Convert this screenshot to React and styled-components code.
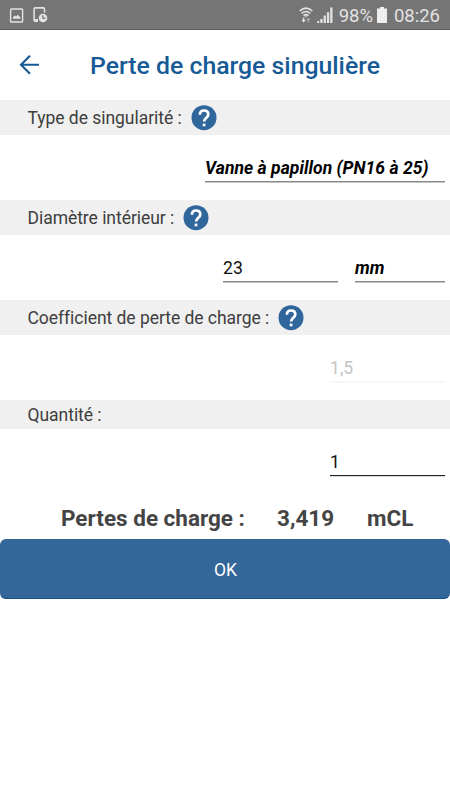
import React from "react";
import styled, {createGlobalStyle, css} from "styled-components";

const GlobalStyle = createGlobalStyle`
  * {
    box-sizing: border-box;
  }

  body {
    margin: 0;
    background: #fff;
    font-family: Roboto, "Liberation Sans", sans-serif;
  }
`;

const Screen = styled.div`
  display: flex;
  flex-direction: column;
  width: 450px;
  height: 800px;
  background: #fff;
`;

const StatusBar = styled.div`
  display: flex;
  justify-content: space-between;
  height: 30px;
  padding: 0 10px 0 9px;
  background: #757575;
  border-bottom: 1px solid #5c595c;
  color: #e2e2e2;
`;

const StatusGroup = styled.div`
  display: flex;
  align-items: center;
  gap: ${props => props.gap}px;
  padding-top: 1px;
`;

const StatusText = styled.span`
  width: ${props => props.width}px;
  padding-top: 2px;
  font-size: 18.5px;
  line-height: 26px;
  text-align: right;
  white-space: nowrap;
`;

const Header = styled.header`
  display: flex;
  align-items: center;
  height: 70px;
  padding-left: 19px;
  color: #165a96;
`;

const BackButton = styled.button`
  display: flex;
  width: 21px;
  padding: 0;
  margin-right: 50px;
  border: 0;
  background: none;
  color: inherit;
`;

const Title = styled.h1`
  margin: 2px 0 0;
  font-size: 24.8px;
  font-weight: 500;
  line-height: 32px;
  white-space: nowrap;
`;

const SectionBar = styled.div`
  display: flex;
  align-items: center;
  gap: 9px;
  height: ${props => props.compact ? 29 : 35}px;
  padding-left: 27.5px;
  background: #f0f0f0;
`;

const Label = styled.label`
  color: #3e3e3e;
  font-size: 17.5px;
  line-height: 24px;
  letter-spacing: -0.04px;
  white-space: nowrap;
`;

const FieldRow = styled.div`
  display: flex;
  justify-content: flex-end;
  gap: 17px;
  height: ${props => props.tall ? 70 : 65}px;
  padding: 20px 5px 0 0;
`;

const Field = styled.div`
  width: ${props => props.width}px;
  height: 27px;
  border-bottom: 1px solid #888;
  box-shadow: 0 1px 0 #c4c4c4;
  color: #111;
  font-size: 17.6px;
  line-height: 26px;
  white-space: nowrap;

  ${props => props.picker && css`
    color: #000;
    font-size: 17.5px;
    font-style: italic;
    font-weight: 700;
    letter-spacing: 0.05px;
  `}

  ${props => props.disabled && css`
    border-color: #f6f6f6;
    box-shadow: 0 1px 0 #f8f8f8;
    color: #c4c4c4;
  `}

  ${props => props.active && css`
    border-color: #222;
    box-shadow: 0 1px 0 #ddd;
  `}
`;

const Result = styled.div`
  display: flex;
  align-items: center;
  height: 40px;
  padding: 0 0 2px 61px;
  color: #444;
  font-size: 22.5px;
  font-weight: 700;
  line-height: 30px;
  white-space: nowrap;
`;

const ResultPart = styled.span`
  width: ${props => props.width}px;
`;

const OkButton = styled.button`
  height: 60px;
  padding: 2px 0 0 1px;
  border: 0;
  border-bottom: 1px solid #14508a;
  border-radius: 6px;
  background: #336699;
  color: #fff;
  font: 400 17.5px Roboto, sans-serif;
`;

const PictureIcon = () => (
  <svg width="15" height="15" viewBox="0 0 15 15">
    <rect x="1.6" y="1" width="12" height="13" rx=".8" fill="none" stroke="currentColor" strokeWidth="1.4" />
    <path d="M4 10.8V9l2-1.4 1.3.8 1.5-1.8 1.2 1.6L11.3 9v1.8z" fill="currentColor" />
  </svg>
);

const DeviceClockIcon = () => (
  <svg width="15" height="16" viewBox="0 0 15 16">
    <path d="M11.5 5.5V2c0-.7-.4-1.1-1.1-1.1H2.2c-.7 0-1.1.4-1.1 1.1v11c0 .7.4 1.1 1.1 1.1H5" fill="none" stroke="currentColor" strokeWidth="1.6" />
    <path d="M1 12h4v2.3H1z" fill="currentColor" />
    <circle cx="10" cy="11" r="4.3" fill="currentColor" />
    <path d="M9.8 8.2v3h2.7" fill="none" stroke="#757575" strokeWidth="1.2" />
  </svg>
);

const WifiIcon = () => (
  <svg width="14" height="16" viewBox="0 0 14 16">
    <g fill="none" stroke="currentColor" strokeWidth="1.5">
      <path d="M.6 4Q7-1.8 13.4 4" />
      <path d="M2.6 6.4Q7 2.7 11.4 6.4" />
      <path d="M4.6 8.6Q7 6.6 9.4 8.6" />
    </g>
    <path d="M5.8 8.8h2.4L7 10.4z" fill="currentColor" />
    <path d="M3.8 10.6h1.6v2.3h1.5L4.6 15.6l-2.3-2.7h1.5z" fill="currentColor" />
    <path d="M8.6 15.5h1.5v-2.4h1.3L9.4 10.6l-2 2.5h1.2z" fill="#aaa" />
  </svg>
);

const SignalIcon = () => (
  <svg width="16" height="16" viewBox="0 0 16 16" fill="currentColor">
    <path d="M0 16v-1.3L2.2 13.4V16zM3.3 16v-4h2.3v4zM6.6 16V8.6h2.3V16zM9.9 16V5.2h2.3V16zM13.2 16V.5h2.3V16z" />
  </svg>
);

const BatteryIcon = () => (
  <svg width="10" height="16" viewBox="0 0 10 16" fill="#eee">
    <path d="M3 0h4v1.5h3V16H0V1.5h3z" />
  </svg>
);

const BackIcon = () => (
  <svg width="21" height="20" viewBox="0 0 21 20" fill="none" stroke="currentColor" strokeWidth="2.1">
    <path d="M20 9.7H1.8M11 .7 2 9.7l9 9" />
  </svg>
);

const HelpIcon = () => (
  <svg width="26" height="26" viewBox="0 0 26 26">
    <circle cx="13" cy="12.7" r="12.5" fill="#2f669b" />
    <path d="M8.9 9.7C8.9 7 10.6 5.5 13 5.5s4.3 1.4 4.3 3.9c0 3.1-4.2 3.6-4.2 7.1" fill="none" stroke="#fff" strokeWidth="2.7" />
    <path d="M11.7 18.6h2.7v2.7h-2.7z" fill="#fff" />
  </svg>
);

export default class App extends React.Component {
  render() {
    return(
      <React.Fragment>
        <GlobalStyle />
        <Screen>
          <StatusBar>
            <StatusGroup gap={9}>
              <PictureIcon />
              <DeviceClockIcon />
            </StatusGroup>
            <StatusGroup gap={4}>
              <WifiIcon />
              <SignalIcon />
              <StatusText width={36}>98%</StatusText>
              <BatteryIcon />
              <StatusText width={49}>08:26</StatusText>
            </StatusGroup>
          </StatusBar>

          <Header>
            <BackButton aria-label="Retour"><BackIcon /></BackButton>
            <Title>Perte de charge singulière</Title>
          </Header>

          <SectionBar>
            <Label>Type de singularité :</Label>
            <HelpIcon />
          </SectionBar>
          <FieldRow>
            <Field width={240} picker>Vanne à papillon (PN16 à 25)</Field>
          </FieldRow>

          <SectionBar>
            <Label>Diamètre intérieur :</Label>
            <HelpIcon />
          </SectionBar>
          <FieldRow>
            <Field width={115}>23</Field>
            <Field width={90} picker>mm</Field>
          </FieldRow>

          <SectionBar>
            <Label>Coefficient de perte de charge :</Label>
            <HelpIcon />
          </SectionBar>
          <FieldRow>
            <Field width={115} disabled>1,5</Field>
          </FieldRow>

          <SectionBar compact>
            <Label>Quantité :</Label>
          </SectionBar>
          <FieldRow tall>
            <Field width={115} active>1</Field>
          </FieldRow>

          <Result>
            <ResultPart width={216}>Pertes de charge :</ResultPart>
            <ResultPart width={90}>3,419</ResultPart>
            <ResultPart>mCL</ResultPart>
          </Result>
          <OkButton>OK</OkButton>
        </Screen>
      </React.Fragment>
    );
  }
}
